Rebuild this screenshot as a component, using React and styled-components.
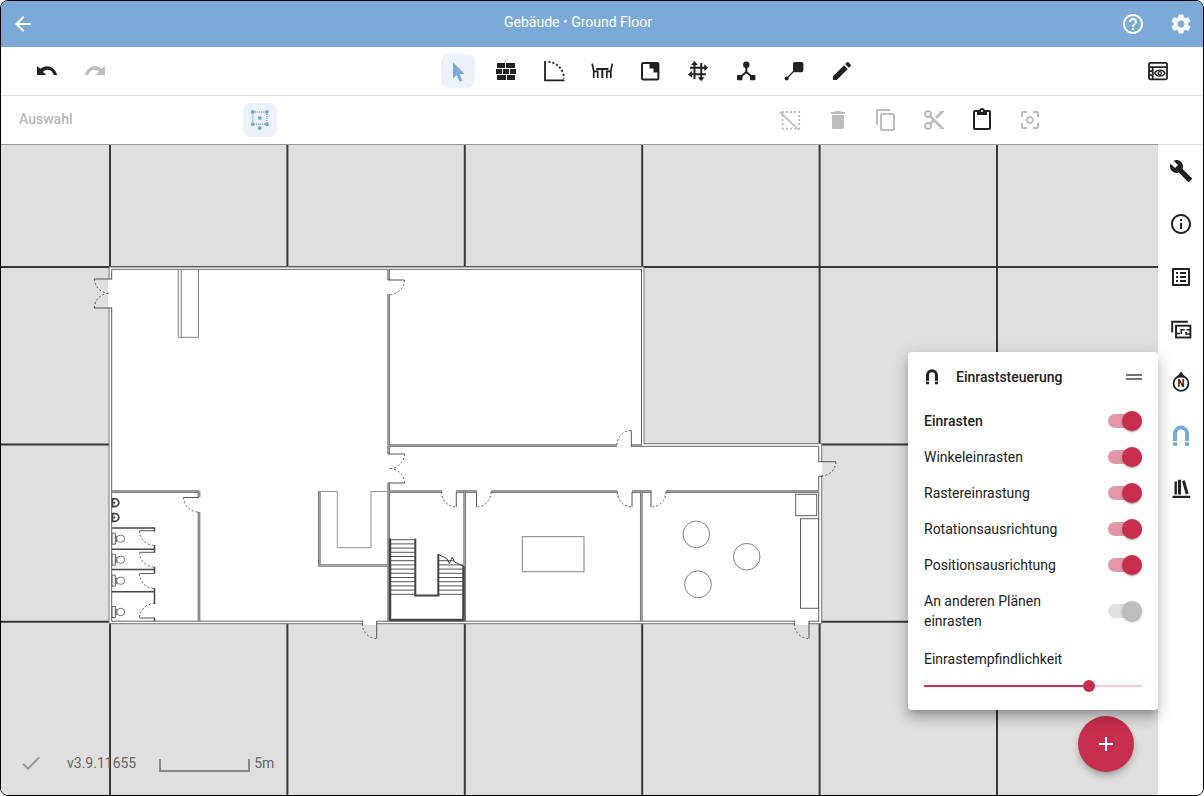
import React, { useState } from "react";
import styled, { createGlobalStyle, css } from "styled-components";
import {
  MdAdd,
  MdArrowBack,
  MdBuild,
  MdCenterFocusWeak,
  MdCheck,
  MdContentCopy,
  MdContentCut,
  MdContentPaste,
  MdDelete,
  MdDragHandle,
  MdEdit,
  MdHelpOutline,
  MdListAlt,
  MdOutlineInfo,
  MdSettings,
} from "react-icons/md";

const blue = "#7caad8";
const red = "#c72e4c";
const ink = "#212121";
const muted = "#bdbdbd";

const GlobalStyle = createGlobalStyle`
  * {
    box-sizing: border-box;
  }
  body {
    margin: 0;
    background: #fff;
    color: ${ink};
    font-family: Roboto, "Liberation Sans", sans-serif;
    font-size: 14px;
    line-height: 20px;
  }
  button, input {
    font: inherit;
  }
`;

const Frame = styled.div`
  display: flex;
  flex-direction: column;
  height: 100vh;
  border: 1px solid #000;
  border-radius: 8px;
  overflow: hidden;
  background: #fff;
`;

const IconButton = styled.button`
  display: flex;
  align-items: center;
  justify-content: center;
  flex: none;
  width: 34px;
  height: 34px;
  padding: 0;
  border: 0;
  border-radius: 8px;
  background: none;
  color: ${ink};
  cursor: pointer;

  svg {
    width: 24px;
    height: 24px;
  }

  &:disabled {
    color: ${muted};
    cursor: default;
  }

  ${(p) =>
    p.$light &&
    css`
      color: #fff;
    `}
  ${(p) =>
    p.$tinted &&
    css`
      color: ${blue};
    `}
  ${(p) =>
    p.$active &&
    css`
      background: #ebf2f9;
      color: ${blue};
    `}
`;

const Group = styled.div`
  display: flex;
  align-items: center;
  gap: 14px;
`;

const Header = styled.header`
  display: flex;
  align-items: center;
  flex: none;
  height: 46px;
  padding: 0 5px;
  background: ${blue};
  color: #fff;
`;

const Title = styled.h1`
  flex: 1;
  margin: 0 8px;
  padding-bottom: 4px;
  font-size: 14px;
  font-weight: 400;
  text-align: center;
`;

const MainBar = styled.div`
  display: grid;
  grid-template-columns: 1fr auto 1fr;
  align-items: center;
  flex: none;
  height: 49px;
  padding: 0 28px;
  border-bottom: 1px solid #dedede;
`;

const Tools = styled(Group)`
  padding-left: 96px;
`;

const EndGroup = styled(Group)`
  justify-content: flex-end;
`;

const SubBar = styled.div`
  display: flex;
  align-items: center;
  flex: none;
  height: 48px;
  padding: 0 156px 0 18px;
`;

const ModeName = styled.span`
  width: 224px;
  padding-bottom: 2px;
  color: #b8b8b8;
  font-weight: 500;
`;

const Actions = styled(Group)`
  margin-left: auto;
`;

const Body = styled.div`
  position: relative;
  display: flex;
  flex: 1;
  min-height: 0;
`;

const Canvas = styled.main`
  position: relative;
  flex: 1;
  min-width: 0;
  border-top: 1px solid #9a9a9a;
  background: #dfdfdf;
  overflow: hidden;
`;

const Drawing = styled.svg`
  display: block;
  width: 100%;
  height: 100%;
`;

const Sidebar = styled.nav`
  display: flex;
  flex-direction: column;
  align-items: center;
  flex: none;
  gap: 19px;
  width: 45px;
  padding: 9px 0 0 1px;
  border-top: 1px solid #dedede;
  background: #fff;
`;

const Status = styled.div`
  position: absolute;
  left: 18px;
  bottom: 20px;
  display: flex;
  align-items: center;
  color: #666;

  > svg {
    width: 24px;
    height: 24px;
    margin-right: 24px;
    color: #999;
  }
`;

const ScaleBar = styled.span`
  width: 91px;
  height: 13px;
  margin: 4px 4px 0 23px;
  border: 2px solid #888;
  border-top: 0;
`;

const Panel = styled.section`
  position: absolute;
  right: 45px;
  bottom: 85px;
  width: 250px;
  padding: 0 16px 17px;
  border-radius: 4px;
  background: #fff;
  box-shadow: 0 5px 6px -3px rgba(0, 0, 0, 0.2), 0 9px 12px 1px rgba(0, 0, 0, 0.14),
    0 3px 16px 2px rgba(0, 0, 0, 0.12);
`;

const PanelHeader = styled.div`
  display: flex;
  align-items: center;
  height: 49px;
  margin-bottom: 2px;

  > svg {
    width: 18px;
    height: 18px;
    margin: 0 15px 0 -1px;
  }
`;

const PanelTitle = styled.h2`
  flex: 1;
  margin: 0;
  font-size: 14px;
  font-weight: 500;
`;

const DragButton = styled(IconButton)`
  width: 24px;
  height: 24px;
  margin-right: -4px;
  color: #757575;
`;

const SwitchRow = styled.label`
  display: flex;
  align-items: center;
  justify-content: space-between;
  gap: 48px;
  padding: 8px 0;
  font-weight: ${(p) => (p.$strong ? 500 : 400)};
`;

const Switch = styled.input.attrs({ type: "checkbox", role: "switch" })`
  display: flex;
  align-items: center;
  justify-content: flex-start;
  flex: none;
  appearance: none;
  width: 34px;
  height: 14px;
  margin: 0;
  border-radius: 7px;
  background: #9e9e9e;

  &::before {
    content: "";
    flex: none;
    width: 20px;
    height: 20px;
    border-radius: 50%;
    background: #fafafa;
    box-shadow: 0 2px 1px -1px rgba(0, 0, 0, 0.2), 0 1px 3px rgba(0, 0, 0, 0.24);
  }

  &:checked {
    justify-content: flex-end;
    background: #e397a6;
  }
  &:checked::before {
    background: ${red};
  }
  &:disabled {
    background: #e0e0e0;
  }
  &:disabled::before {
    background: ${muted};
  }
`;

const SliderLabel = styled.label`
  display: block;
  padding: 10px 0;
`;

const Slider = styled.input.attrs({ type: "range" })`
  display: block;
  appearance: none;
  width: 100%;
  height: 14px;
  margin: 0;
  background: linear-gradient(${red}, ${red}) left / var(--fill) 2px no-repeat,
    linear-gradient(#f3c9d4, #f3c9d4) center / 100% 2px no-repeat;

  &::-webkit-slider-thumb {
    appearance: none;
    width: 12px;
    height: 12px;
    border-radius: 50%;
    background: ${red};
  }
`;

const AddButton = styled.button`
  position: absolute;
  right: 69px;
  bottom: 23px;
  display: flex;
  align-items: center;
  justify-content: center;
  width: 56px;
  height: 56px;
  padding: 0;
  border: 0;
  border-radius: 50%;
  background: ${red};
  color: #fff;
  box-shadow: 0 3px 5px -1px rgba(0, 0, 0, 0.2), 0 5px 8px rgba(0, 0, 0, 0.14);

  svg {
    width: 24px;
    height: 24px;
  }
`;

const Icon = ({ children, ...rest }) => (
  <svg viewBox="0 0 24 24" fill="currentColor" aria-hidden="true" {...rest}>
    {children}
  </svg>
);

const UndoIcon = () => (
  <Icon>
    <path d="M13.3 7.2c-2.7 0-5.100 1-6.700 2.500L3 7v9h9.300l-3.400-3.300c1.300-1.100 2.800-1.900 4.700-1.900 2.900 0 5 1.900 6.200 5.200h3.400c-1.400-5.300-5.300-8.800-9.900-8.800z" />
  </Icon>
);

const RedoIcon = () => (
  <Icon>
    <path d="M12.700 7.200c2.700 0 5.100 1 6.700 2.500L23 7v9h-9.300l3.400-3.300c-1.300-1.100-2.800-1.900-4.700-1.900-2.900 0-5 1.900-6.200 5.200H2.800c1.400-5.300 5.300-8.800 9.900-8.800z" />
  </Icon>
);

const CursorIcon = () => (
  <Icon>
    <path d="M7 3.2 18.6 15h-5.200l3 6.500-2.700 1.200-3-6.600L7 19.700z" />
  </Icon>
);

const WallIcon = () => (
  <Icon>
    <path d="M3 16h9v5H3zM2 10h6v5H2zM9 10h6v5H9zM16 10h6v5h-6zM13 16h8v5h-8zM3 4h8v5H3zM12 4h9v5h-9z" />
  </Icon>
);

const DoorIcon = () => (
  <Icon fill="none" stroke="currentColor" strokeWidth="1.8">
    <path d="M3 2v19.3h19.5" />
    <path d="M6.5 2.8A16.5 16.5 0 0 1 21.8 19.5" strokeDasharray="2 2" />
  </Icon>
);

const FurnitureIcon = () => (
  <Icon fill="none" stroke="currentColor" strokeWidth="1.7">
    <path d="M2.2 4.700l1.500 7.500v6.700M3.700 12.400h4v6.500M22.300 4.700l-1.500 7.500v6.700M20.800 12.400h-4v6.500" />
    <path d="M6.200 10h12.200M12.300 10v8.900" strokeWidth="2" />
  </Icon>
);

const RoomIcon = () => (
  <Icon>
    <rect x="4" y="4" width="16.400" height="16.400" rx="1.500" fill="none" stroke="currentColor" strokeWidth="2" />
    <path d="M11.500 3.500h9v10h-5v-4h-4z" />
  </Icon>
);

const GridIcon = () => (
  <Icon>
    <path d="M8.500 5v15M15.200 4v15M4 8.700h15M5 15.300h15" fill="none" stroke="currentColor" strokeWidth="2" />
    <path d="M8.500 2l3.400 4H5.100zM15.200 22.200l3.400-4h-6.800zM22.200 8.700l-4-3.400v6.800zM2 15.300l4-3.400v6.800z" />
  </Icon>
);

const TreeIcon = () => (
  <Icon>
    <circle cx="12.300" cy="5.800" r="3.200" />
    <rect x="3" y="16" width="5.400" height="5.200" rx=".6" />
    <rect x="16" y="16" width="5.400" height="5.200" rx=".6" />
    <path d="M12.300 7v6l-6.500 5.500M12.300 13l6.500 5.500" fill="none" stroke="currentColor" strokeWidth="2" />
  </Icon>
);

const MarkerIcon = () => (
  <Icon>
    <rect x="11" y="3" width="10.400" height="10.200" rx="2" />
    <circle cx="4.700" cy="19.400" r="2" />
    <path d="M4.700 19.400 14 10" stroke="currentColor" strokeWidth="1.300" />
  </Icon>
);

const PreviewIcon = () => (
  <Icon fill="none" stroke="currentColor" strokeWidth="1.800">
    <rect x="3" y="3.800" width="18" height="16.500" rx="1.200" />
    <path d="M3 8.200h18M6.700 8.200v12M3 12.200h3.700M3 16.200h3.700" />
    <path d="M8.500 14.200c2.600-4 8-4 10.600 0-2.600 4-8 4-10.600 0z" strokeWidth="1.300" />
    <circle cx="13.800" cy="14.200" r="1.600" strokeWidth="1.300" />
  </Icon>
);

const TransformIcon = () => (
  <Icon>
    <path d="M4.800 3.900h14v12.300h-14z" fill="none" stroke="currentColor" strokeWidth="1.500" strokeDasharray="1 1" />
    <circle cx="4.800" cy="3.900" r="2" />
    <circle cx="18.800" cy="3.900" r="2" />
    <circle cx="4.800" cy="16.200" r="2" />
    <circle cx="18.800" cy="16.200" r="2" />
    <circle cx="11.800" cy="10" r="2" />
    <circle cx="11.800" cy="20" r="2" />
    <path d="M11.800 16v4" stroke="currentColor" strokeDasharray="1 1" />
  </Icon>
);

const DeselectIcon = () => (
  <Icon fill="none" stroke="currentColor" strokeWidth="1.800">
    <path d="M4 4h18M4 20.600h18M4.600 7v12M21.200 7v12" strokeDasharray="2 2" />
    <path d="M1.600 3.600 20.800 22" strokeWidth="1.700" />
  </Icon>
);

const PlansIcon = () => (
  <Icon fill="none" stroke="currentColor" strokeWidth="1.900">
    <path d="M3.200 14.500V3.800h15.600" />
    <rect x="7" y="7.700" width="14.400" height="11.800" />
    <path d="M7 15.500h4M12.300 16v-4.300h3.500M21 11.700h-3.500M21 16h-4v-2" strokeWidth="1.600" />
  </Icon>
);

const NorthIcon = () => (
  <Icon>
    <circle cx="12" cy="12.400" r="7.400" fill="none" stroke="currentColor" strokeWidth="1.800" />
    <path d="M12 .6 16.500 6.500h-9z" />
    <text x="12" y="16" fontSize="10" fontWeight="700" textAnchor="middle">
      N
    </text>
  </Icon>
);

const MagnetIcon = () => (
  <Icon>
    <path d="M6 17V9.600a6 6 0 0 1 12 0V17" fill="none" stroke="currentColor" strokeWidth="4" />
    <path d="M4 18.200h4v3.500H4zM16 18.200h4v3.500h-4z" />
  </Icon>
);

const LibraryIcon = () => (
  <Icon>
    <path d="M5.500 4.500h2.400v13H5.500zM9 2.800h3v14.700H9zM13 4.100l2.800-.8 3.800 13.200-2.800 1zM3.500 18.700h17.700v2.200H3.500z" />
  </Icon>
);

const gridStep = 177.4;
const gridLines = Array.from({ length: 16 }, (_, i) => i * gridStep);

// wall pieces between the door openings
const walls = [
  "M388.700 269v11M388.700 294v160M388.700 483v138",
  "M389 445.700H617M631 445.700H642",
  "M389 491.700H442M456 491.700H477M491 491.700H617.500M632 491.700H651.500M666 491.700H819",
  "M464.700 491V621M641.300 491V621",
  "M112 491.700H199.500M199 491V497M199 512V621",
  "M319.300 491V565.500M318 565.500H388.700",
];

const doorLeaves =
  "M94 279H112M94 308H112M388 280H404.500M388 454H404.500M388 483H404.500M183.500 497.500H199M456.300 492V507M476.500 492V507M632 492V507M651 492V507M631.300 430.500V446M818.500 461.700H836M376.700 621V638.500M809 621V638.500";

const doorSwings =
  "M94.300 279A15 15 0 0 0 109 293.300M94.300 308A15 15 0 0 1 109 293.300M404.500 280A15 15 0 0 1 389 294.500M404.500 454A15 15 0 0 1 389 468.500M404.500 483A15 15 0 0 0 389 468.500M183.500 497.500A15 15 0 0 0 198.500 512M441.500 492A15 15 0 0 0 456 507M491 492A15 15 0 0 1 476.500 507M617.300 492A15 15 0 0 0 632 507M666 492A15 15 0 0 1 651 507M617 445A14.500 14.500 0 0 1 631.300 430.500M836 462A15 15 0 0 1 821 476M362.300 624A14.500 14.500 0 0 0 376.700 638.500M794.300 624A14.500 14.500 0 0 0 809 638.500M139.500 531A15 15 0 0 0 154.500 545.500M139.500 552.500A15 15 0 0 0 154.500 567M139.500 573.700A15 15 0 0 0 154.500 588.500M154.500 603.500A15 15 0 0 0 139.500 618";

const stalls =
  "M112 528H155M112 549.200H155M112 569.600H155M112 591.700H155M154.500 527.500V531.500M154.500 545V552.500M154.500 566.700V573.700M154.500 588V604M154.500 618V621";

const stallDoors = "M139.500 530.700H155M139.500 552.300H155M139.500 573.600H155M139.500 618H155";

const FloorPlan = () => (
  <Drawing role="img" aria-label="Ground Floor">
    <g stroke="#383838" strokeWidth="2">
      {gridLines.map((n) => (
        <line key={n} x1={109 + n} x2={109 + n} y1="0" y2="100%" />
      ))}
      {gridLines.map((n) => (
        <line key={n} x1="0" x2="100%" y1={122 + n} y2={122 + n} />
      ))}
    </g>
    <g transform="translate(-1 -145)" fill="none" stroke="#606060" strokeWidth="1">
      <path d="M109 267H644V443.700H821.700V623.700H109z" fill="#fff" stroke="#777" />
      <path d="M111.700 269.300H641.500V446.300H818.700V621.200H111.700z" />
      {walls.map((d) => (
        <g key={d}>
          <path d={d} stroke="#707070" strokeWidth="2.700" />
          <path d={d} stroke="#aaa" />
        </g>
      ))}
      <path
        d="M108 279.500h5v28h-5zM817.500 462.200h5v14h-5zM362.800 620h13.400v5h-13.400zM794.800 620h13.700v5h-13.700z"
        fill="#fff"
        stroke="none"
      />
      <path d={doorLeaves} stroke="#555" />
      <path d="M362.300 620.700v4M794.300 620.700v4M818.500 476.200h4" />
      <path d={doorSwings} stroke="#555" strokeDasharray="2 2" />
      <path d={stalls} stroke="#444" strokeWidth="1.500" />
      <path d={stallDoors} stroke="#555" />

      <path d="M178.300 269V337.300H198.500V269M181.300 269V337.300" stroke="#808080" />
      <path d="M319 491.500H337.300V547.700H371V491.500H389" stroke="#909090" />
      <rect x="522.300" y="536.700" width="61.700" height="35" stroke="#808080" />
      <circle cx="696.300" cy="534.300" r="13.300" stroke="#808080" />
      <circle cx="746.700" cy="556.700" r="13.300" stroke="#808080" />
      <circle cx="698" cy="584.300" r="13.400" stroke="#808080" />
      <rect x="795.700" y="494.300" width="21" height="21.400" />
      <rect x="800.500" y="518.700" width="18" height="89.600" />

      {[502.7, 517.5].map((y) => (
        <g key={y} stroke="#444">
          <path d={`M112.500 ${y - 3.8}h2.500a3.800 3.800 0 0 1 0 7.600h-2.500z`} strokeWidth="1.800" />
          <circle cx="114.300" cy={y} r=".7" fill="#333" />
        </g>
      ))}
      {[538.7, 559.7, 580.7, 612].map((y) => (
        <g key={y}>
          <path d={`M112 ${y - 5.5}h3.300v11h-3.300z`} />
          <path d={`M116 ${y - 3.2}v6.400`} strokeWidth="1.500" />
          <ellipse cx="120.700" cy={y} rx="4" ry="3.700" stroke="#777" />
        </g>
      ))}

      {Array.from({ length: 14 }, (_, i) => 539.7 + i * 4.2).map((y, i) => (
        <g key={y} stroke="#555">
          <path d={`M390 ${y}H415`} />
          {i > 4 && <path d={`M438.500 ${y}H${i === 5 ? 454 : 463}`} />}
        </g>
      ))}
      <path d="M415.300 538.500V595.500H438.300V554" stroke="#444" strokeWidth="2" />
      <path d="M390 538.500V620H463.500V566" stroke="#444" strokeWidth="2.500" />
      <path d="M438.300 554.500 447 558.500 449.300 563.500 452.300 557 454.500 562 464 566.500" stroke="#444" />
    </g>
  </Drawing>
);

const tools = [
  ["Auswahl", CursorIcon],
  ["Wände", WallIcon],
  ["Türen", DoorIcon],
  ["Möbel", FurnitureIcon],
  ["Räume", RoomIcon],
  ["Raster", GridIcon],
  ["Netzwerk", TreeIcon],
  ["Markierung", MarkerIcon],
  ["Zeichnen", MdEdit],
];

const actions = [
  ["Auswahl aufheben", DeselectIcon, true],
  ["Löschen", MdDelete, true],
  ["Kopieren", MdContentCopy, true],
  ["Ausschneiden", MdContentCut, true],
  ["Einfügen", MdContentPaste, false],
  ["Zentrieren", MdCenterFocusWeak, true],
];

const sideItems = [
  ["Werkzeuge", MdBuild],
  ["Informationen", MdOutlineInfo],
  ["Eigenschaften", MdListAlt],
  ["Pläne", PlansIcon],
  ["Norden", NorthIcon],
  ["Einraststeuerung", MagnetIcon],
  ["Bibliothek", LibraryIcon],
];

const snapOptions = [
  { label: "Einrasten", strong: true },
  { label: "Winkeleinrasten" },
  { label: "Rastereinrastung" },
  { label: "Rotationsausrichtung" },
  { label: "Positionsausrichtung" },
  { label: "An anderen Plänen einrasten", disabled: true },
];

function SnapPanel() {
  const [sensitivity, setSensitivity] = useState(77);
  return (
    <Panel>
      <PanelHeader>
        <MagnetIcon />
        <PanelTitle>Einraststeuerung</PanelTitle>
        <DragButton aria-label="Verschieben">
          <MdDragHandle />
        </DragButton>
      </PanelHeader>
      {snapOptions.map(({ label, strong, disabled }) => (
        <SwitchRow key={label} $strong={strong}>
          {label}
          <Switch defaultChecked disabled={disabled} />
        </SwitchRow>
      ))}
      <SliderLabel htmlFor="sensitivity">Einrastempfindlichkeit</SliderLabel>
      <Slider
        id="sensitivity"
        value={sensitivity}
        onChange={(e) => setSensitivity(Number(e.target.value))}
        style={{ "--fill": `${sensitivity}%` }}
      />
    </Panel>
  );
}

function App() {
  const [tool, setTool] = useState("Auswahl");
  return (
    <>
      <GlobalStyle />
      <Frame>
        <Header>
          <IconButton $light aria-label="Zurück">
            <MdArrowBack />
          </IconButton>
          <Title>Gebäude • Ground Floor</Title>
          <Group>
            <IconButton $light aria-label="Hilfe">
              <MdHelpOutline />
            </IconButton>
            <IconButton $light aria-label="Einstellungen">
              <MdSettings />
            </IconButton>
          </Group>
        </Header>
        <MainBar>
          <Group>
            <IconButton aria-label="Rückgängig">
              <UndoIcon />
            </IconButton>
            <IconButton disabled aria-label="Wiederholen">
              <RedoIcon />
            </IconButton>
          </Group>
          <Tools>
            {tools.map(([name, Glyph]) => (
              <IconButton key={name} aria-label={name} $active={tool === name} onClick={() => setTool(name)}>
                <Glyph />
              </IconButton>
            ))}
          </Tools>
          <EndGroup>
            <IconButton aria-label="Ansicht">
              <PreviewIcon />
            </IconButton>
          </EndGroup>
        </MainBar>
        <SubBar>
          <ModeName>Auswahl</ModeName>
          <IconButton $active aria-label="Transformieren">
            <TransformIcon />
          </IconButton>
          <Actions>
            {actions.map(([name, Glyph, disabled]) => (
              <IconButton key={name} aria-label={name} disabled={disabled}>
                <Glyph />
              </IconButton>
            ))}
          </Actions>
        </SubBar>
        <Body>
          <Canvas>
            <FloorPlan />
            <Status>
              <MdCheck />
              <span>v3.9.11655</span>
              <ScaleBar />
              <span>5m</span>
            </Status>
          </Canvas>
          <Sidebar>
            {sideItems.map(([name, Glyph]) => (
              <IconButton key={name} aria-label={name} $tinted={name === "Einraststeuerung"}>
                <Glyph />
              </IconButton>
            ))}
          </Sidebar>
          <AddButton aria-label="Hinzufügen">
            <MdAdd />
          </AddButton>
          <SnapPanel />
        </Body>
      </Frame>
    </>
  );
}

export default App;
